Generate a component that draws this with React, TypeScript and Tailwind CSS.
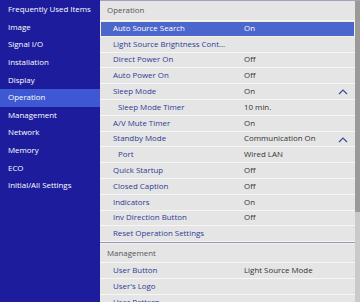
type Row = {
  label: string;
  value?: string;
  indent?: boolean;
  active?: boolean;
  chevron?: boolean;
};

const MENU = [
  "Frequently Used Items",
  "Image",
  "Signal I/O",
  "Installation",
  "Display",
  "Operation",
  "Management",
  "Network",
  "Memory",
  "ECO",
  "Initial/All Settings",
];

const OPERATION: Row[] = [
  { label: "Auto Source Search", value: "On", active: true },
  { label: "Light Source Brightness Cont..." },
  { label: "Direct Power On", value: "Off" },
  { label: "Auto Power On", value: "Off" },
  { label: "Sleep Mode", value: "On", chevron: true },
  { label: "Sleep Mode Timer", value: "10 min.", indent: true },
  { label: "A/V Mute Timer", value: "On" },
  { label: "Standby Mode", value: "Communication On", chevron: true },
  { label: "Port", value: "Wired LAN", indent: true },
  { label: "Quick Startup", value: "Off" },
  { label: "Closed Caption", value: "Off" },
  { label: "Indicators", value: "On" },
  { label: "Inv Direction Button", value: "Off" },
  { label: "Reset Operation Settings" },
];

const MANAGEMENT: Row[] = [
  { label: "User Button", value: "Light Source Mode" },
  { label: "User's Logo" },
  { label: "User Pattern" },
];

function Chevron() {
  return (
    <svg width="10" height="6" viewBox="0 0 10 6" className="absolute right-[7px] top-[5px]">
      <path d="M1 5 L5 1 L9 5" fill="none" stroke="#3a4aa8" strokeWidth="1.2" />
    </svg>
  );
}

function SettingRow({ row }: { row: Row }) {
  return (
    <div
      className={`relative flex h-[15.8px] items-center border-b border-[#f6f6f6] ${
        row.active ? "bg-[#4b66cc] outline outline-1 -outline-offset-1 outline-[#f3efcf]" : ""
      }`}
    >
      <span
        className={`w-[144px] shrink-0 whitespace-nowrap ${row.indent ? "pl-[18px]" : "pl-[13px]"} ${
          row.active ? "text-white" : "text-[#2d3b95]"
        }`}
      >
        {row.label}
      </span>
      {row.value && (
        <span className={`whitespace-nowrap ${row.active ? "text-white" : "text-[#333333]"}`}>
          {row.value}
        </span>
      )}
      {row.chevron && <Chevron />}
    </div>
  );
}

export default function App() {
  return (
    <div className="flex h-[302px] w-[360px] overflow-hidden bg-[#1c1c9c] font-['Open_Sans',sans-serif] text-[7.9px] leading-[11px]">
      <nav className="w-[100px] shrink-0 pt-[1px]">
        {MENU.map((m) => (
          <div
            key={m}
            className={`flex h-[17.6px] items-center whitespace-nowrap pl-[8px] text-white ${
              m === "Operation" ? "bg-[#3d58d2]" : ""
            }`}
          >
            {m}
          </div>
        ))}
      </nav>

      <div className="flex flex-1 border-t border-[#9ea3bd] bg-[#e5e5e5]">
        <div className="flex-1 overflow-hidden">
          <div className="flex h-[20px] items-center border-b border-[#f6f6f6] pl-[7px] text-[#555555]">
            Operation
          </div>
          {OPERATION.map((r) => (
            <SettingRow key={r.label} row={r} />
          ))}
          <div className="h-[1px] bg-[#8e96d2]" />
          <div className="h-[1px] bg-[#f4f1dc]" />
          <div className="flex h-[19px] items-center border-b border-[#f6f6f6] pl-[7px] text-[#555555]">
            Management
          </div>
          {MANAGEMENT.map((r) => (
            <SettingRow key={r.label} row={r} />
          ))}
        </div>
        <div className="w-[5px] shrink-0 bg-[#cacaca]">
          <div className="h-[211px] bg-[#9a9a9a]" />
        </div>
      </div>
    </div>
  );
}
